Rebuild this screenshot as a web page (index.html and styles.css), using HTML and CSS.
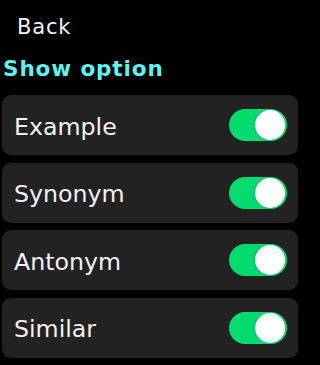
FILE: index.html
```html
<!DOCTYPE html>
<html>
<head>
<meta charset="utf-8">
<link rel="stylesheet" href="styles.css">
</head>
<body>
<div class="screen">
  <div class="back">Back</div>
  <div class="title">Show option</div>
  <div class="list">
    <div class="card"><span class="label">Example</span><span class="toggle"><span class="knob"></span></span></div>
    <div class="card"><span class="label">Synonym</span><span class="toggle"><span class="knob"></span></span></div>
    <div class="card"><span class="label">Antonym</span><span class="toggle"><span class="knob"></span></span></div>
    <div class="card"><span class="label">Similar</span><span class="toggle"><span class="knob"></span></span></div>
  </div>
</div>
</body>
</html>
```
FILE: styles.css
```css
html, body {
  margin: 0;
  padding: 0;
  background: #000;
}
.screen {
  width: 300px;
  height: 365px;
  display: flex;
  flex-direction: column;
  font-family: "DejaVu Sans", sans-serif;
  color: #f2f2f2;
  overflow: hidden;
}
.back {
  padding: 15px 0 0 17px;
  font-size: 21px;
  line-height: 24px;
  letter-spacing: 0.8px;
}
.title {
  padding: 18px 0 0 3px;
  font-size: 21.5px;
  line-height: 24px;
  font-weight: 700;
  letter-spacing: 0.9px;
  color: #5ef2f0;
}
.list {
  display: flex;
  flex-direction: column;
  gap: 7.5px;
  padding: 14px 2px 0 2px;
}
.card {
  height: 60px;
  background: #222222;
  border-radius: 9px;
  display: flex;
  align-items: center;
  justify-content: space-between;
  padding: 0 11px 0 12px;
}
.label {
  font-size: 23.7px;
  line-height: 30px;
  padding-top: 3px;
}
.toggle {
  width: 58px;
  height: 32px;
  border-radius: 16px;
  background: #05dc6f;
  display: flex;
  align-items: center;
  justify-content: flex-end;
  padding-right: 2px;
  box-sizing: border-box;
}
.knob {
  width: 30px;
  height: 30px;
  border-radius: 50%;
  background: #fff;
  box-shadow: -1px 0 2px rgba(0,0,0,0.15);
}
```
